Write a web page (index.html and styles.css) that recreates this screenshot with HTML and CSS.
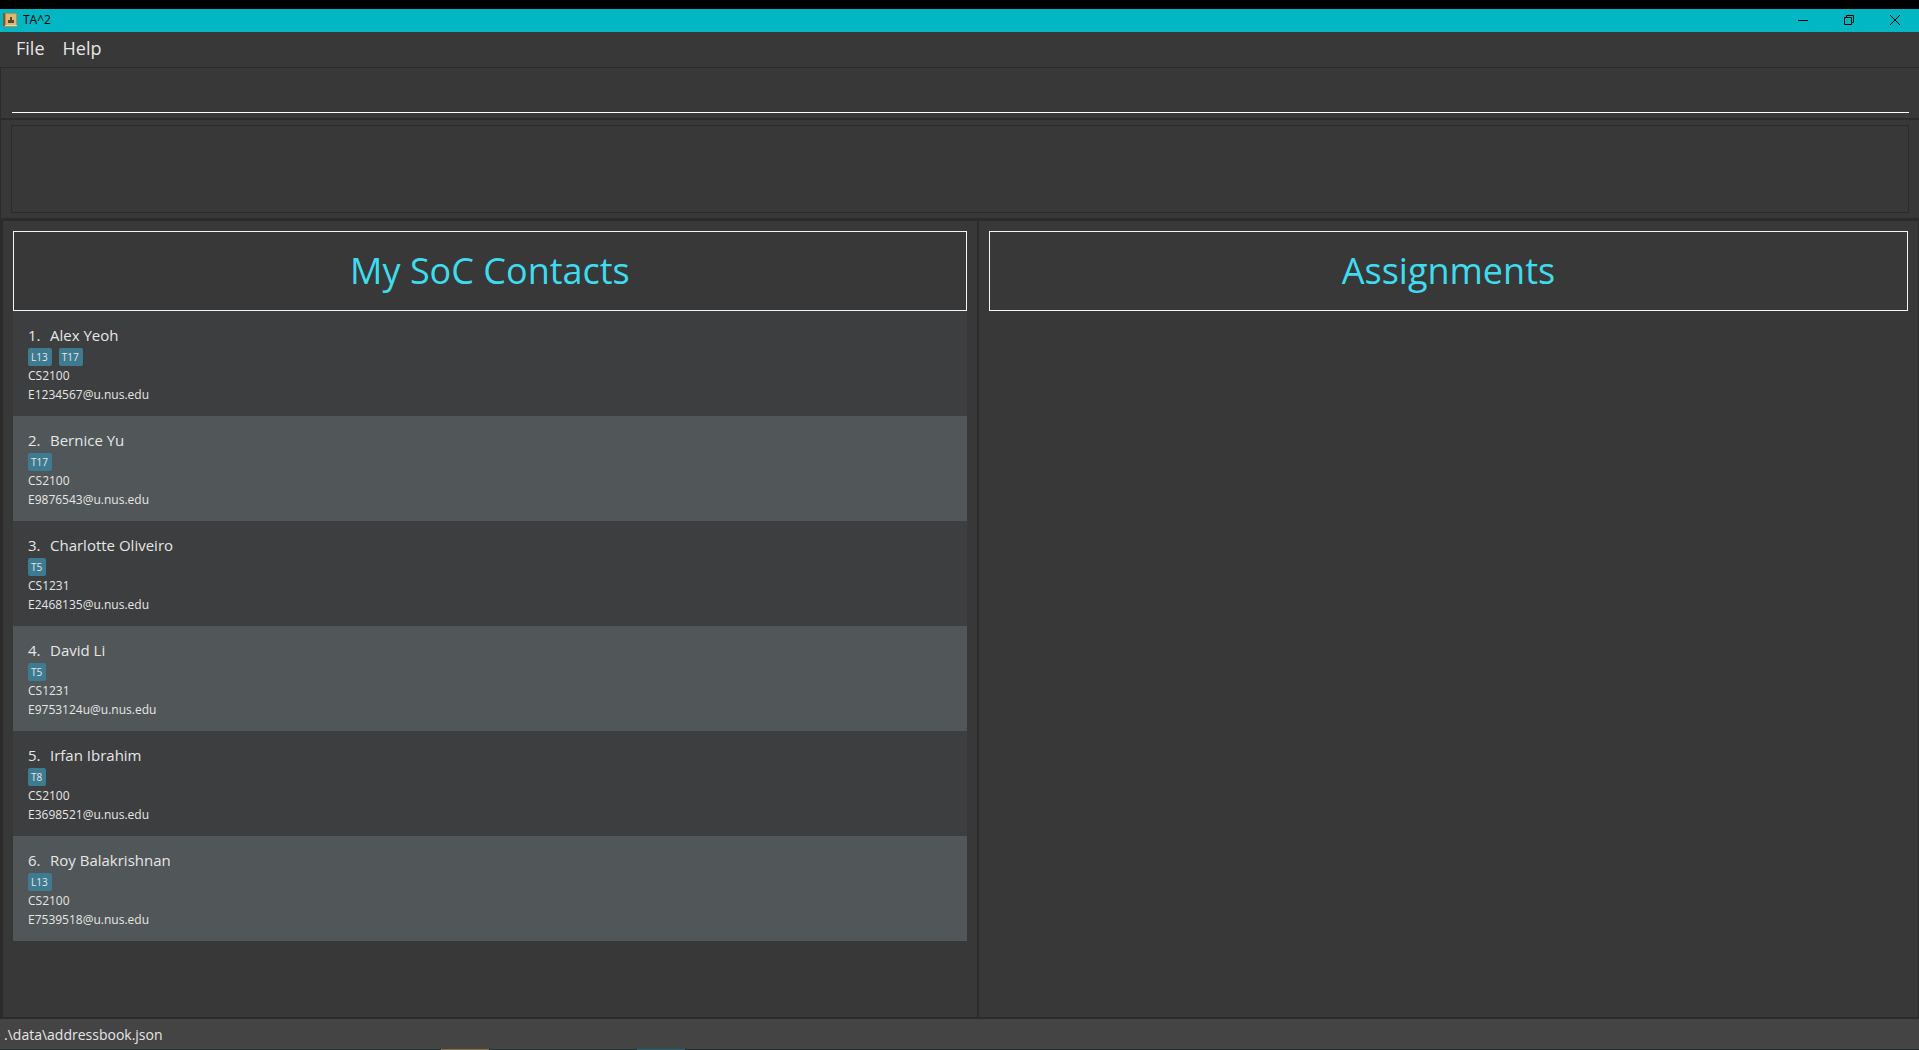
FILE: index.html
```html
<!DOCTYPE html>
<html lang="en">
<head>
<meta charset="utf-8">
<title>TA^2</title>
<link rel="stylesheet" href="styles.css">
</head>
<body>
<header class="titlebar">
  <svg class="app-icon" width="14" height="14" viewBox="0 0 14 14" aria-hidden="true">
    <rect width="14" height="14" rx="1" fill="#c08a45"/>
    <rect x="3" y="1" width="10" height="11" fill="#dfb673"/>
    <rect x="0" y="0" width="2" height="13" fill="#7d5a34"/>
    <rect x="2" y="12" width="12" height="1" fill="#ead6ae"/>
    <path d="M7 4h2v3h2v3H5V7h2z" fill="#5a4630"/>
  </svg>
  <h1 class="app-title">TA^2</h1>
  <div class="window-controls">
    <button class="window-button" type="button" aria-label="Minimize"><svg width="10" height="10" viewBox="0 0 10 10"><path d="M0 5.5h10"/></svg></button>
    <button class="window-button" type="button" aria-label="Restore"><svg width="10" height="10" viewBox="0 0 10 10"><path d="M.5 2.5h7v7h-7zM2.500 2.500v-2h7v7h-2"/></svg></button>
    <button class="window-button" type="button" aria-label="Close"><svg width="10" height="10" viewBox="0 0 10 10"><path d="M0 0l10 10M10 0L0 10"/></svg></button>
  </div>
</header>
<nav class="menubar">
  <button class="menu" type="button">File</button>
  <button class="menu" type="button">Help</button>
</nav>
<div class="command-pane">
  <input class="command" type="text" aria-label="Command">
</div>
<div class="result-pane">
  <textarea class="result" aria-label="Result" readonly></textarea>
</div>
<main class="panes">
  <section class="pane contacts">
    <h2 class="pane-title">My SoC Contacts</h2>
    <ol class="people">
      <li class="person">
        <h3 class="name"><span class="index">1.</span>Alex Yeoh</h3>
        <div class="tags"><span class="tag">L13</span><span class="tag">T17</span></div>
        <p class="detail">CS2100</p>
        <p class="detail">E1234567@u.nus.edu</p>
      </li>
      <li class="person">
        <h3 class="name"><span class="index">2.</span>Bernice Yu</h3>
        <div class="tags"><span class="tag">T17</span></div>
        <p class="detail">CS2100</p>
        <p class="detail">E9876543@u.nus.edu</p>
      </li>
      <li class="person">
        <h3 class="name"><span class="index">3.</span>Charlotte Oliveiro</h3>
        <div class="tags"><span class="tag">T5</span></div>
        <p class="detail">CS1231</p>
        <p class="detail">E2468135@u.nus.edu</p>
      </li>
      <li class="person">
        <h3 class="name"><span class="index">4.</span>David Li</h3>
        <div class="tags"><span class="tag">T5</span></div>
        <p class="detail">CS1231</p>
        <p class="detail">E9753124u@u.nus.edu</p>
      </li>
      <li class="person">
        <h3 class="name"><span class="index">5.</span>Irfan Ibrahim</h3>
        <div class="tags"><span class="tag">T8</span></div>
        <p class="detail">CS2100</p>
        <p class="detail">E3698521@u.nus.edu</p>
      </li>
      <li class="person">
        <h3 class="name"><span class="index">6.</span>Roy Balakrishnan</h3>
        <div class="tags"><span class="tag">L13</span></div>
        <p class="detail">CS2100</p>
        <p class="detail">E7539518@u.nus.edu</p>
      </li>
    </ol>
  </section>
  <section class="pane assignments">
    <h2 class="pane-title">Assignments</h2>
  </section>
</main>
<footer class="statusbar">.\data\addressbook.json</footer>
<div class="taskbar-edge"></div>
</body>
</html>
```
FILE: styles.css
```css
* { box-sizing: border-box; }

body {
  margin: 0;
  min-height: 100vh;
  display: flex;
  flex-direction: column;
  border-top: 9px solid #000;
  background: #383838;
  color: #e6e6e6;
  font-family: "Open Sans", "Noto Sans", sans-serif;
}

h1, h2, h3, p, ol { margin: 0; padding: 0; font-weight: 400; }

button { border: 0; padding: 0; background: none; color: inherit; font: inherit; }

.titlebar {
  display: flex;
  align-items: center;
  height: 23px;
  padding: 0 1px 1px 3px;
  background: #00b7c3;
  color: #000;
}

.app-title { flex: 1; padding-left: 6px; font-size: 12px; line-height: 16px; }

.window-controls { display: flex; }

.window-button { display: grid; place-items: center; width: 46px; height: 22px; }
.window-button svg { fill: none; stroke: #000; }

.menubar {
  display: flex;
  gap: 18px;
  height: 35px;
  padding: 0 16px 2px;
  font-size: 18px;
  line-height: 33px;
}

.command-pane {
  height: 52px;
  padding: 9px 10px 5px 11px;
  border: 1px solid #2b2b2b;
  border-right: 0;
}

.command {
  display: block;
  width: 100%;
  height: 36px;
  border: 0;
  border-bottom: 1px solid #fff;
  background: none;
  color: #fff;
  font: inherit;
  outline: 0;
}

.result-pane {
  height: 100px;
  padding: 5px 10px 5px 10px;
  border: 1px solid #2b2b2b;
  border-right: 0;
}

.result {
  display: block;
  width: 100%;
  height: 88px;
  border: 1px solid #2b2b2b;
  background: none;
  color: #fff;
  font: inherit;
  resize: none;
  outline: 0;
}

.panes {
  flex: 1;
  display: grid;
  grid-template-columns: 53fr 51fr;
  border: 2px solid #2b2b2b;
  border-width: 2px 1px 2px 3px;
}

.pane { padding: 10px; }
.contacts { border-right: 2px solid #2b2b2b; }

.pane-title {
  height: 80px;
  border: 1px solid #f4f4f4;
  color: #3fdcef;
  font-size: 36px;
  line-height: 78px;
  text-align: center;
}

.people { list-style: none; }

.person { padding: 13px 15px 12px; background: #3c3e3f; }
.person:nth-child(even) { background: #515658; }

.name { display: flex; padding-bottom: 2px; font-size: 15px; line-height: 22px; }
.index { width: 22px; }

.tags { display: flex; gap: 7px; }
.tag {
  padding: 0 4px 0 3px;
  border-radius: 2px;
  background: #3e7b91;
  font-size: 10px;
  line-height: 18px;
}

.detail { font-size: 12px; line-height: 19px; }

.statusbar {
  height: 30px;
  padding: 0 4px;
  background: #444;
  font-size: 14px;
  line-height: 31px;
}

.taskbar-edge {
  height: 1px;
  background: linear-gradient(90deg, #1d3436 0 441px, #8a7748 441px 489px, #1d3436 489px 637px, #176a76 637px 685px, #1d2b30 685px);
}
```
